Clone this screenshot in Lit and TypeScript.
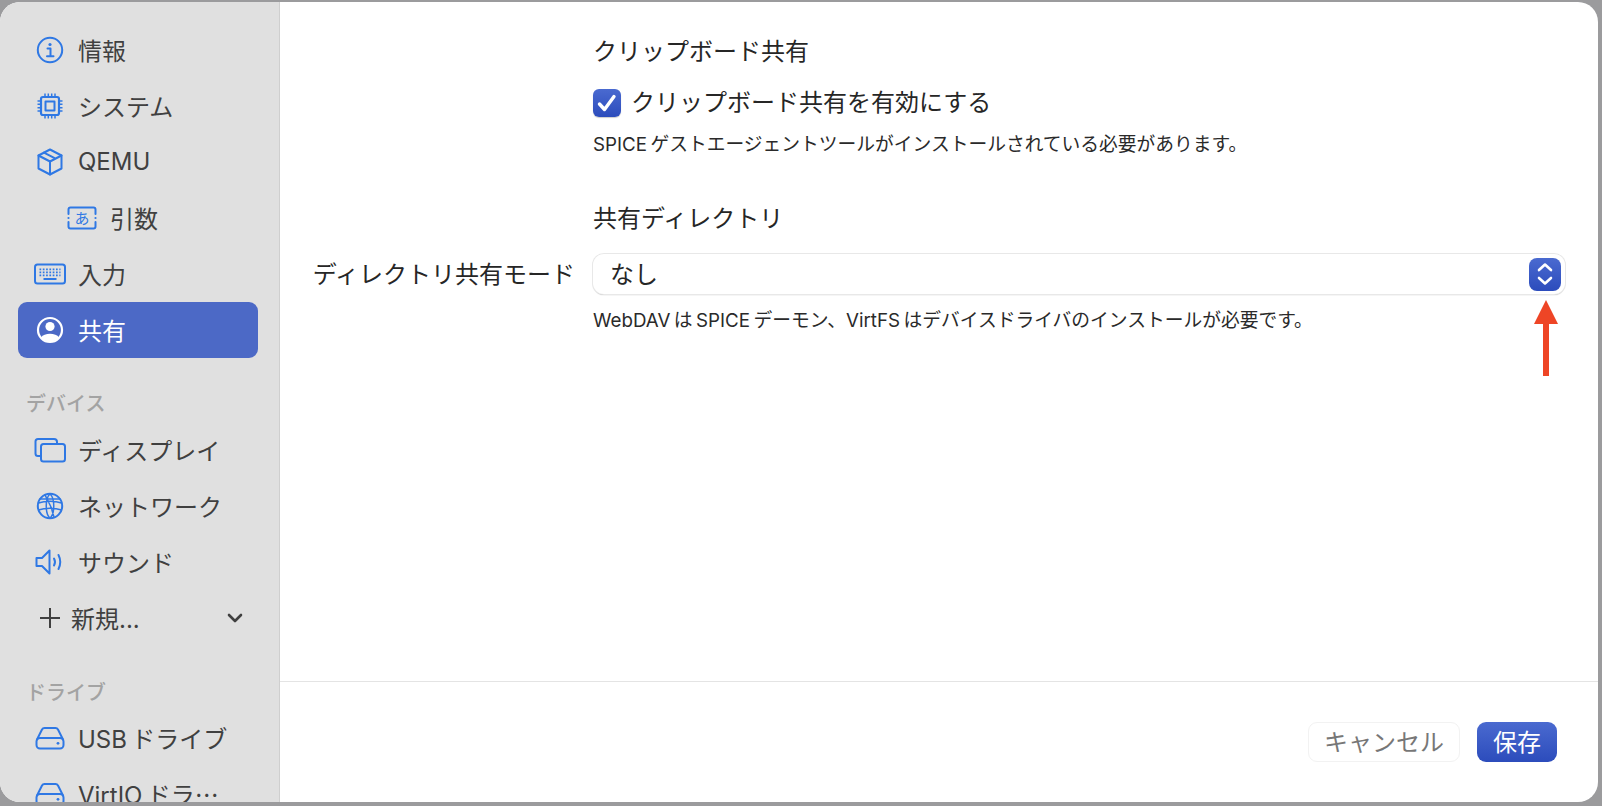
import { LitElement, html, css, svg } from "lit";
import { customElement } from "lit/decorators.js";

const I = (w: number, h: number, body: unknown) => html`<svg class="ic" width=${w} height=${h} viewBox="0 0 ${w} ${h}" fill="none" stroke="currentColor" stroke-width="2" stroke-linecap="round" stroke-linejoin="round">${body}</svg>`;

const icons: Record<string, unknown> = {
  info: I(28, 28, svg`<circle cx="14" cy="14" r="12.2"/><circle cx="14" cy="8.5" r="1.6" fill="currentColor" stroke="none"/><path d="M11.5 12.5H14.5V20M11 20.2H17.5"/>`),
  cpu: I(28, 28, svg`<rect x="5" y="5" width="18" height="18" rx="2" stroke-width="2.2"/><rect x="9.5" y="9.5" width="9" height="9" stroke-width="2"/><path d="M9 1.5V4.5M12.3 1.5V4.5M15.7 1.5V4.5M19 1.5V4.5M9 23.5V26.5M12.3 23.5V26.5M15.7 23.5V26.5M19 23.5V26.5M1.5 9H4.5M1.5 12.3H4.5M1.5 15.7H4.5M1.5 19H4.5M23.5 9H26.5M23.5 12.3H26.5M23.5 15.7H26.5M23.5 19H26.5" stroke-width="1.5" stroke-linecap="butt"/>`),
  box: I(28, 28, svg`<path d="M14 1.5L25.5 7.5V20.5L14 26.5L2.5 20.5V7.5Z"/><path d="M2.5 7.5L14 13.5L25.5 7.5M14 13.5V26.5M8 4.6L19.6 10.6"/>`),
  args: I(30, 24, svg`<path d="M1.5 8V3.5Q1.5 1.5 3.5 1.5H26.5Q28.5 1.5 28.5 3.5V8M28.5 16V20.5Q28.5 22.5 26.5 22.5H3.5Q1.5 22.5 1.5 20.5V16"/><circle cx="1.5" cy="12" r="1.1" fill="currentColor" stroke="none"/><circle cx="28.5" cy="12" r="1.1" fill="currentColor" stroke="none"/><text x="15" y="18" text-anchor="middle" font-size="15" fill="currentColor" stroke="none" font-family="'Noto Sans CJK JP'">あ</text>`),
  kbd: I(32, 22, svg`<rect x="1" y="1.5" width="30" height="19" rx="2.5"/><path d="M5.5 6.3H26.5M5.5 9.3H26.5M5.5 12.3H26.5" stroke-width="1.8" stroke-dasharray="1.7 1.6" stroke-linecap="butt"/><path d="M9.5 16H22.5" stroke-width="2" stroke-linecap="butt"/>`),
  person: I(28, 28, svg`<circle cx="14" cy="14" r="12" stroke-width="2.2"/><circle cx="14" cy="10.5" r="4.6" fill="currentColor" stroke="none"/><path d="M5 21.5C8 16.5 20 16.5 23 21.5C20 27 8 27 5 21.5Z" fill="currentColor" stroke="none"/>`),
  display: I(32, 26, svg`<path d="M7 19H4Q1.5 19 1.5 16.5V4.5Q1.5 2 4 2H20Q23 2 23 5V6.5"/><rect x="7" y="7" width="24" height="17.5" rx="2.5"/>`),
  globe: I(28, 28, svg`<circle cx="14" cy="14" r="12.2"/><path d="M14 2C9 6 9 22 14 26C19 22 19 6 14 2ZM2.5 11C9 8.5 19 8.5 25.5 11M2.5 18C9 15.5 19 15.5 25.5 18M4 7L24 7M9 2.8L15 15L18 25" stroke-width="1.5"/>`),
  sound: I(30, 26, svg`<path d="M1.5 9H7L14.5 1.5V24.5L7 17H1.5Z"/><path d="M19 9.5Q21 13 19 16.5M23.5 6Q27 13 23.5 20"/>`),
  drive: I(30, 24, svg`<path d="M2 13.5L7 3.5Q7.8 2 9.5 2H20.5Q22.2 2 23 3.5L28 13.5"/><rect x="1.5" y="12" width="27" height="10.5" rx="3.5"/><circle cx="23" cy="17.3" r="1.4" fill="currentColor" stroke="none"/>`),
};

interface Row { icon: string; text: string; sub?: boolean; on?: boolean; }
const top: Row[] = [
  { icon: "info", text: "情報" },
  { icon: "cpu", text: "システム" },
  { icon: "box", text: "QEMU" },
  { icon: "args", text: "引数", sub: true },
  { icon: "kbd", text: "入力" },
  { icon: "person", text: "共有", on: true },
];
const devices: Row[] = [
  { icon: "display", text: "ディスプレイ" },
  { icon: "globe", text: "ネットワーク" },
  { icon: "sound", text: "サウンド" },
];
const drives: Row[] = [
  { icon: "drive", text: "USB\u2009ドライブ" },
  { icon: "drive", text: "VirtIO\u2009ドラ⋯" },
];

@customElement("app-root")
export class AppRoot extends LitElement {
  static styles = css`
    :host {
      display: block;
      width: 1602px;
      height: 806px;
      box-sizing: border-box;
      padding: 2px 4px 4px 0;
      background: #9b9b9d;
      font-family: Inter, "Noto Sans CJK JP", sans-serif;
      overflow: hidden;
    }
    .win {
      height: 100%;
      display: flex;
      background: #fff;
      border-radius: 20px;
      overflow: hidden;
    }
    .side {
      width: 280px;
      flex: none;
      box-sizing: border-box;
      padding: 20px 21px 0 18px;
      background: #e0e0e0;
      border-right: 1px solid #cfcfcf;
      overflow: hidden;
      color: #404040;
      font-size: 24px;
    }
    .row {
      height: 56px;
      display: flex;
      align-items: center;
      border-radius: 9px;
    }
    .row > .t { padding-bottom: 2px; white-space: nowrap; }
    .row.on { background: #4c69c6; color: #fff; }
    .row.on .slot { color: #fff; }
    .slot {
      width: 60px;
      flex: none;
      box-sizing: border-box;
      padding-left: 3px;
      display: flex;
      justify-content: center;
      color: #2f78e4;
    }
    .row.sub { padding-left: 32px; }
    .ic { display: block; }
    .label {
      height: 28px;
      margin: 30px 0 0 8px;
      display: flex;
      align-items: center;
      font-size: 20px;
      color: #a3a3a3;
      font-weight: 500;
    }
    .label + .row { margin-top: 6px; }
    .add { padding-left: 21px; gap: 10px; }
    .add .chev { margin-left: auto; margin-right: 15px; }
    .add + .label { margin-top: 31px; }
    .add + .label + .row { margin-top: 5px; }
    .main {
      flex: 1;
      min-width: 0;
      display: flex;
      flex-direction: column;
      color: #262626;
    }
    .content { height: 679px; flex: none; box-sizing: border-box; padding-top: 34px; }
    .form {
      display: grid;
      grid-template-columns: 295px 1fr;
      column-gap: 18px;
      margin-right: 33px;
      font-size: 24px;
      align-items: center;
    }
    .form > .c2 { grid-column: 2; }
    .h { line-height: 32px; }
    .check { display: flex; align-items: center; gap: 10px; margin-top: 18px; line-height: 34px; }
    .box {
      width: 28px; height: 28px; flex: none; border-radius: 6px;
      background: linear-gradient(#4a6ad0, #2c4cbc);
      box-shadow: 0 1px 1px rgba(0,0,0,.2);
      display: flex; align-items: center; justify-content: center;
    }
    .note { font-size: 18.75px; line-height: 26px; margin-top: 12px; color: #2a2a2a; white-space: nowrap; }
    .gap { margin-top: 45px; }
    .lab { text-align: right; white-space: nowrap; margin-top: 19px; padding-bottom: 3px; }
    .select {
      margin-top: 19px;
      height: 40px;
      display: flex;
      align-items: center;
      justify-content: space-between;
      padding: 0 4px 0 17px;
      border-radius: 11px;
      background: #fff;
      box-shadow: 0 0 0 1px #e8e8e8, 0 1px 1px 0 rgba(0,0,0,.4);
    }
    .select > .val { padding-bottom: 3px; }
    .stepper {
      width: 32px; height: 33px; border-radius: 8px;
      background: linear-gradient(#4a6ad0, #2c4cbc);
      display: flex; align-items: center; justify-content: center;
    }
    .note2 { margin-top: 14px; word-spacing: 1px; }
    .foot {
      flex: 1;
      border-top: 1px solid #e4e4e4;
      display: flex;
      justify-content: flex-end;
      align-items: flex-start;
      gap: 17px;
      padding: 40px 41px 0 0;
      font-size: 24px;
    }
    .btn {
      height: 40px; box-sizing: border-box;
      border-radius: 9px;
      display: flex; align-items: center; justify-content: center;
      padding-bottom: 4px;
    }
    .cancel { width: 152px; border: 1.5px solid #f2f2f2; color: #777; }
    .save { width: 80px; background: linear-gradient(#4a6ad0, #2c4cbc); color: #fff; }
    .arrow { position: absolute; left: 1534px; top: 300px; display: block; }
  `;

  private row(r: Row) {
    return html`<div class="row ${r.sub ? "sub" : ""} ${r.on ? "on" : ""}">
      <span class="slot">${icons[r.icon]}</span><span class="t">${r.text}</span>
    </div>`;
  }

  render() {
    return html`<div class="win">
        <aside class="side">
          ${top.map((r) => this.row(r))}
          <div class="label">デバイス</div>
          ${devices.map((r) => this.row(r))}
          <div class="row add">
            <svg class="ic" width="22" height="22" viewBox="0 0 22 22" stroke="currentColor" stroke-width="2"><path d="M11 1V21M1 11H21"/></svg>
            <span class="t">新規...</span>
            <svg class="ic chev" width="16" height="10" viewBox="0 0 16 10" fill="none" stroke="currentColor" stroke-width="2.6" stroke-linecap="round" stroke-linejoin="round"><path d="M2 2L8 8L14 2"/></svg>
          </div>
          <div class="label">ドライブ</div>
          ${drives.map((r) => this.row(r))}
        </aside>
        <main class="main">
          <div class="content">
            <div class="form">
              <div class="c2 h">クリップボード共有</div>
              <div class="c2 check">
                <span class="box"><svg width="22" height="20" viewBox="0 0 22 20" fill="none" stroke="#fff" stroke-width="3.4" stroke-linecap="round" stroke-linejoin="round"><path d="M3.5 11L8.5 16.5L18 3.5"/></svg></span>
                <span>クリップボード共有を有効にする</span>
              </div>
              <div class="c2 note">SPICE\u2009ゲストエージェントツールがインストールされている必要があります。</div>
              <div class="c2 h gap">共有ディレクトリ</div>
              <div class="lab">ディレクトリ共有モード</div>
              <div class="select">
                <span class="val">なし</span>
                <span class="stepper"><svg width="18" height="26" viewBox="0 0 18 26" fill="none" stroke="#fff" stroke-width="2.6" stroke-linecap="round" stroke-linejoin="round"><path d="M3 9L9 3.5L15 9M3 17L9 22.5L15 17"/></svg></span>
              </div>
              <div class="c2 note note2">WebDAV\u2009は\u2009SPICE\u2009デーモン、VirtFS\u2009はデバイスドライバのインストールが必要です。</div>
            </div>
          </div>
          <div class="foot">
            <div class="btn cancel">キャンセル</div>
            <div class="btn save">保存</div>
          </div>
        </main>
      </div>
      <svg class="arrow" width="24" height="76" viewBox="0 0 24 76"><path d="M12 0L24 24H15V76H9V24H0Z" fill="#ee4526"/></svg>`;
  }
}
